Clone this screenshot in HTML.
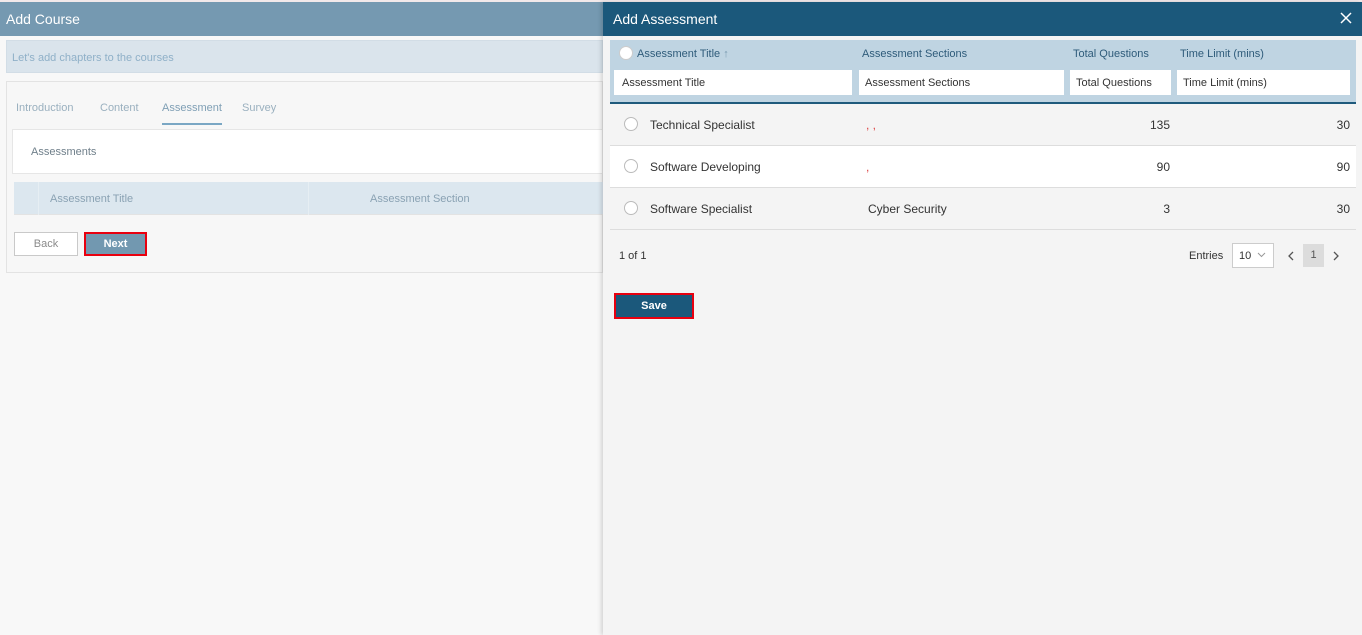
<!DOCTYPE html>
<html><head><style>
*{box-sizing:border-box;margin:0;padding:0}
body{width:1362px;height:635px;overflow:hidden;font-family:"Liberation Sans",sans-serif;background:#f8f8f8;position:relative;font-size:12px}
.a{position:absolute;white-space:nowrap}
</style></head><body>
<div class="a" style="left:0;top:0;width:1362px;height:2px;background:#f2e9ea"></div>
<div class="a" style="left:0;top:2px;width:603px;height:34px;background:#7599b1;color:#fff;font-size:14px;padding:9px 6px">Add Course</div>
<div class="a" style="left:6px;top:40px;width:597px;height:33px;background:#dae4ec;border:1px solid #d2dde6;color:#8fb0c8;font-size:11px;padding:11px 5px">Let's add chapters to the courses</div>
<div class="a" style="left:6px;top:81px;width:597px;height:192px;border:1px solid #e3e3e3;background:#f7f7f7"></div>
<div class="a" style="left:16px;top:102px;font-size:11px;color:#9ab0bf">Introduction</div>
<div class="a" style="left:100px;top:102px;font-size:11px;color:#9ab0bf">Content</div>
<div class="a" style="left:162px;top:102px;font-size:11px;color:#7f9fb5">Assessment</div>
<div class="a" style="left:162px;top:123px;width:60px;height:2px;background:#7aa7c4"></div>
<div class="a" style="left:242px;top:102px;font-size:11px;color:#9ab0bf">Survey</div>
<div class="a" style="left:12px;top:129px;width:591px;height:45px;background:#fff;border:1px solid #e6e6e6;color:#6f7f8a;font-size:11px;padding:16px 18px">Assessments</div>
<div class="a" style="left:14px;top:182px;width:589px;height:33px;background:#dce7ef;border-bottom:1px solid #e3e3e3"></div>
<div class="a" style="left:38px;top:182px;width:1px;height:33px;background:#e6eef3"></div>
<div class="a" style="left:308px;top:182px;width:1px;height:33px;background:#e6eef3"></div>
<div class="a" style="left:50px;top:193px;font-size:11px;color:#8aa2b3">Assessment Title</div>
<div class="a" style="left:370px;top:193px;font-size:11px;color:#8aa2b3">Assessment Section</div>
<div class="a" style="left:14px;top:232px;width:64px;height:24px;border:1px solid #c9c9c9;background:#fff;color:#8a8a8a;font-size:11px;text-align:center;line-height:23px">Back</div>
<div class="a" style="left:84px;top:232px;width:63px;height:24px;border:2px solid #e8000f;background:#7298b0;color:#fff;font-weight:bold;font-size:11px;text-align:center;line-height:21px">Next</div>

<div class="a" style="left:603px;top:2px;width:759px;height:633px;background:#f4f4f4;box-shadow:-2px 0 4px rgba(0,0,0,.15)"></div>
<div class="a" style="left:603px;top:2px;width:759px;height:34px;background:#1b587b;color:#fff;font-size:14px;padding:9px 10px">Add Assessment</div>
<svg class="a" style="left:1340px;top:12px" width="12" height="12"><path d="M1 1L11 11M11 1L1 11" stroke="#fff" stroke-width="1.5"/></svg>
<div class="a" style="left:610px;top:40px;width:746px;height:64px;background:#bfd4e2;border-bottom:2px solid #1f5a7c"></div>
<div class="a" style="left:619px;top:46px;width:14px;height:14px;border-radius:50%;background:#fff;border:1px solid #ccc"></div>
<div class="a" style="left:637px;top:48px;font-size:11px;color:#2e5b7a">Assessment Title <span style="color:#7a9ab0">↑</span></div>
<div class="a" style="left:862px;top:48px;font-size:11px;color:#2e5b7a">Assessment Sections</div>
<div class="a" style="left:1073px;top:48px;font-size:11px;color:#2e5b7a">Total Questions</div>
<div class="a" style="left:1180px;top:48px;font-size:11px;color:#2e5b7a">Time Limit (mins)</div>
<div class="a" style="left:614px;top:70px;width:238px;height:25px;background:#fff;font-size:11px;color:#333;padding:7px 8px">Assessment Title</div>
<div class="a" style="left:859px;top:70px;width:205px;height:25px;background:#fff;font-size:11px;color:#333;padding:7px 6px">Assessment Sections</div>
<div class="a" style="left:1070px;top:70px;width:101px;height:25px;background:#fff;font-size:11px;color:#333;padding:7px 6px">Total Questions</div>
<div class="a" style="left:1177px;top:70px;width:173px;height:25px;background:#fff;font-size:11px;color:#333;padding:7px 6px">Time Limit (mins)</div>

<div class="a" style="left:610px;top:104px;width:746px;height:42px;border-bottom:1px solid #ddd"></div>
<div class="a" style="left:610px;top:146px;width:746px;height:42px;background:#fff;border-bottom:1px solid #ddd"></div>
<div class="a" style="left:610px;top:188px;width:746px;height:42px;border-bottom:1px solid #ddd"></div>

<div class="a" style="left:624px;top:117px;width:14px;height:14px;border-radius:50%;border:1px solid #bbb;background:#fff"></div>
<div class="a" style="left:650px;top:118px;font-size:12px;color:#333">Technical Specialist</div>
<div class="a" style="left:866px;top:118px;font-size:12px;color:#d44">, ,</div>
<div class="a" style="left:1140px;top:118px;font-size:12px;color:#333;width:30px;text-align:right">135</div>
<div class="a" style="left:1320px;top:118px;font-size:12px;color:#333;width:30px;text-align:right">30</div>

<div class="a" style="left:624px;top:159px;width:14px;height:14px;border-radius:50%;border:1px solid #bbb;background:#fff"></div>
<div class="a" style="left:650px;top:160px;font-size:12px;color:#333">Software Developing</div>
<div class="a" style="left:866px;top:160px;font-size:12px;color:#d44">,</div>
<div class="a" style="left:1140px;top:160px;font-size:12px;color:#333;width:30px;text-align:right">90</div>
<div class="a" style="left:1320px;top:160px;font-size:12px;color:#333;width:30px;text-align:right">90</div>

<div class="a" style="left:624px;top:201px;width:14px;height:14px;border-radius:50%;border:1px solid #bbb;background:#fff"></div>
<div class="a" style="left:650px;top:202px;font-size:12px;color:#333">Software Specialist</div>
<div class="a" style="left:868px;top:202px;font-size:12px;color:#333">Cyber Security</div>
<div class="a" style="left:1140px;top:202px;font-size:12px;color:#333;width:30px;text-align:right">3</div>
<div class="a" style="left:1320px;top:202px;font-size:12px;color:#333;width:30px;text-align:right">30</div>

<div class="a" style="left:619px;top:250px;font-size:11px;color:#333">1 of 1</div>
<div class="a" style="left:1189px;top:250px;font-size:11px;color:#333">Entries</div>
<div class="a" style="left:1232px;top:243px;width:42px;height:25px;border:1px solid #ccc;background:#fff;font-size:11px;color:#333;padding:6px 6px">10</div>
<svg class="a" style="left:1257px;top:252px" width="9" height="6"><path d="M1 1L4.5 4.5L8 1" stroke="#999" fill="none"/></svg>
<svg class="a" style="left:1288px;top:251px" width="6" height="10"><path d="M5 1L1 5L5 9" stroke="#555" fill="none" stroke-width="1.3"/></svg>
<div class="a" style="left:1303px;top:244px;width:21px;height:23px;background:#dcdcdc;font-size:11px;color:#555;text-align:center;line-height:23px">1</div>
<svg class="a" style="left:1333px;top:251px" width="6" height="10"><path d="M1 1L5 5L1 9" stroke="#555" fill="none" stroke-width="1.3"/></svg>

<div class="a" style="left:614px;top:293px;width:80px;height:26px;border:2px solid #e8000f;background:#1b587b;color:#fff;font-weight:bold;font-size:11px;text-align:center;line-height:23px">Save</div>
</body></html>
